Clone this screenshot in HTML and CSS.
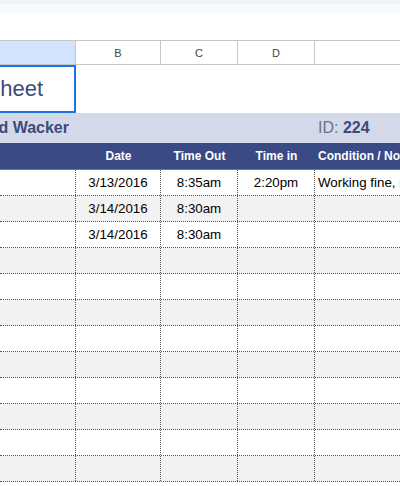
FILE: index.html
```html
<!DOCTYPE html>
<html lang="en">
<head>
    <meta charset="UTF-8">
    <meta name="viewport" content="width=device-width, initial-scale=1.0">
    <title>Equipment Sign Out Sheet</title>
    <link rel="stylesheet" href="styles.css">
</head>
<body>

    <div class="toolbar-edge"></div>
    <div class="toolbar-shade"></div>
    <div class="formula-bar"></div>

    <div class="col-heads">
        <div class="col-head selected"></div>
        <div class="col-head">B</div>
        <div class="col-head">C</div>
        <div class="col-head">D</div>
        <div class="col-head last"></div>
    </div>

    <div class="title-row">
        <div class="title-cell"><span>Equipment Sign Out Sheet</span></div>
    </div>

    <div class="info-band">
        <div class="manager"><span>Equipment Manager: Ed Wacker</span></div>
        <div class="equip-id">ID: <b>224</b></div>
    </div>

    <div class="grid head">
        <div class="cell"></div>
        <div class="cell">Date</div>
        <div class="cell">Time Out</div>
        <div class="cell">Time in</div>
        <div class="cell left">Condition / Notes</div>
    </div>

    <div id="rows"></div>

    <script>
        // Registros de saída do equipamento
        const records = [
            ['', '3/13/2016', '8:35am', '2:20pm', 'Working fine, no issues'],
            ['', '3/14/2016', '8:30am', '', ''],
            ['', '3/14/2016', '8:30am', '', '']
        ];

        const rows = document.getElementById('rows');
        for (let i = 0; i < 12; i++) {
            const data = records[i] || ['', '', '', '', ''];
            const row = document.createElement('div');
            row.className = 'grid row' + (i % 2 ? ' alt' : '');
            data.forEach(function (value, j) {
                const cell = document.createElement('div');
                cell.className = 'cell' + (j === 4 ? ' left' : '');
                cell.textContent = value;
                row.appendChild(cell);
            });
            rows.appendChild(row);
        }
    </script>

</body>
</html>
```

FILE: styles.css
```css
body {
    margin: 0;
    font-family: "Liberation Sans", Arial, sans-serif;
    background-color: white;
    overflow: hidden;
}
.toolbar-edge {
    height: 4px;
    background-color: #eef2f7;
}
.toolbar-shade {
    height: 9px;
    background-color: #f8f9fb;
}
.formula-bar {
    height: 27px;
}
.col-heads {
    display: grid;
    grid-template-columns: 76px 85px 77px 77px 1fr;
    height: 23px;
    border-top: 1px solid #c4c7c5;
    border-bottom: 1px solid #c4c7c5;
}
.col-head {
    display: flex;
    justify-content: center;
    align-items: center;
    font-size: 11px;
    color: #444;
    border-right: 1px solid #c4c7c5;
}
.col-head.selected {
    background-color: #d3e3fd;
}
.col-head.last {
    border-right: none;
}
.title-row {
    height: 48px;
}
.title-cell {
    box-sizing: border-box;
    width: 76px;
    height: 48px;
    border: 2px solid #1a73e8;
    border-left: none;
    display: flex;
    justify-content: flex-end;
    align-items: center;
    padding-right: 31px;
    overflow: hidden;
    white-space: nowrap;
    font-size: 22px;
    color: #3d4a7c;
}
.info-band {
    display: flex;
    align-items: center;
    height: 30px;
    background-color: #d4d9ea;
    white-space: nowrap;
}
.manager {
    box-sizing: border-box;
    width: 76px;
    display: flex;
    justify-content: flex-end;
    padding-right: 7px;
    overflow: hidden;
    font-size: 16px;
    font-weight: bold;
    color: #3d4a7c;
}
.equip-id {
    margin-left: 242px;
    font-size: 16px;
    color: #6b7385;
}
.equip-id b {
    color: #3d4a7c;
}
.grid {
    display: grid;
    grid-template-columns: 76px 85px 77px 77px 1fr;
}
.head {
    height: 26px;
    background-color: #3a4a85;
    border-bottom: 1px solid #c65a5a;
}
.head .cell {
    font-size: 12px;
    font-weight: bold;
    color: white;
}
.cell {
    display: flex;
    justify-content: center;
    align-items: center;
    overflow: hidden;
    white-space: nowrap;
}
.cell.left {
    justify-content: flex-start;
    padding-left: 3px;
}
.row {
    height: 25px;
    border-bottom: 1px dotted #555;
}
.row.alt {
    background-color: #f2f2f2;
}
.row .cell {
    font-size: 13.33px;
    color: black;
    border-right: 1px dotted #555;
}
.row .cell:last-child {
    border-right: none;
}
```
